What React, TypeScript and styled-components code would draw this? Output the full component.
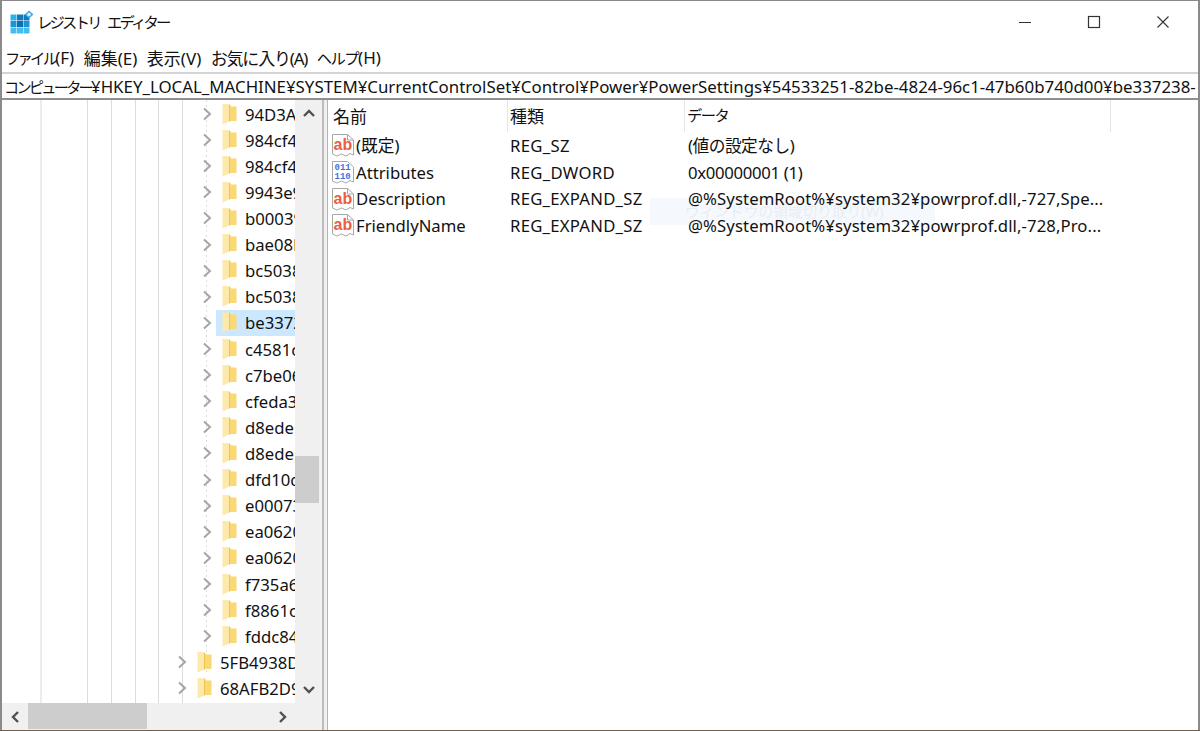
import React from 'react'
import styled, { createGlobalStyle } from 'styled-components'

const GlobalStyle = createGlobalStyle`
	* {
		box-sizing: border-box;
	}

	html,
	body {
		margin: 0;
		height: 731px;
		overflow: hidden;
		background: #75604f;
	}

	body {
		color: #111;
		font-family: 'Noto Sans', 'Noto Sans CJK JP', sans-serif;
		font-size: 16.7px;
	}
`

const Window = styled.div`
	background: #fff;
	border: solid #8a8a8a;
	border-width: 1px 2px 0 2px;
	display: flex;
	flex-direction: column;
	height: 730px;
	position: relative;
	width: 1200px;
`

const Kana = styled.span<{ $loose?: boolean }>`
	font-size: 0.9em;
	letter-spacing: ${(p) => (p.$loose ? '-0.1em' : '-0.18em')};
`

const TitleBar = styled.div`
	align-items: center;
	display: flex;
	flex: 0 0 42px;
	padding-left: 8px;
`

const Title = styled.div`
	font-size: 17px;
	margin-left: 3px;
	margin-top: -1px;
	word-spacing: 6px;
`

const WindowButtons = styled.div`
	display: flex;
	margin-left: auto;
	margin-right: 1px;
`

const WindowButton = styled.div`
	align-items: center;
	display: flex;
	height: 42px;
	justify-content: center;
	width: 69px;
`

const MenuBar = styled.div`
	align-items: center;
	display: flex;
	flex: 0 0 29px;
	font-size: 17px;
	gap: 9.5px;
	padding-left: 3px;
	padding-bottom: 1px;
`

const MenuItem = styled.div<{ $spacing?: number }>`
	letter-spacing: ${(p) => p.$spacing ?? 0}px;
	white-space: nowrap;
`

const AddressBar = styled.div`
	align-items: center;
	border-bottom: 2px solid #8f8f8f;
	border-top: 2px solid #d4d4d4;
	display: flex;
	flex: 0 0 28px;
	font-size: 16.85px;
	overflow: hidden;
	padding-left: 2px;
	white-space: pre;
`

const Body = styled.div`
	display: flex;
	flex: 1;
	min-height: 0;
`

const TreePane = styled.div`
	display: grid;
	flex: 0 0 320px;
	grid-template-columns: 1fr 27px;
	grid-template-rows: 1fr 27px;
	min-height: 0;
`

const TreeView = styled.div`
	background-image:
		linear-gradient(#ececec, #ececec),
		linear-gradient(#dcdcdc, #dcdcdc),
		linear-gradient(#dcdcdc, #dcdcdc),
		linear-gradient(#dcdcdc, #dcdcdc),
		linear-gradient(#dcdcdc, #dcdcdc),
		linear-gradient(#dcdcdc, #dcdcdc),
		repeating-linear-gradient(#dcdcdc 0 2px, transparent 2px 5px);
	background-position: 38px 0, 85px 0, 109px 0, 133px 0, 156px 0, 180px 0, 204px 0;
	background-repeat: no-repeat;
	background-size: 2px 100%, 1px 100%, 1px 100%, 1px 100%, 1px 100%, 1px 100%, 1px 575px;
	overflow: hidden;
	padding-top: 1px;
`

const TreeRow = styled.div<{ $depth: number }>`
	align-items: center;
	display: flex;
	height: 26.12px;
	padding-left: ${(p) => (p.$depth === 1 ? 199 : 174)}px;
	white-space: nowrap;
`

const Chevron = styled.svg`
	flex: 0 0 12px;
	height: 14px;
	width: 12px;
`

const RowBody = styled.div<{ $selected?: boolean }>`
	align-items: center;
	background: ${(p) => (p.$selected ? '#cce8ff' : 'transparent')};
	display: flex;
	flex: 1;
	gap: 8px;
	height: 100%;
	margin-left: 3px;
	min-width: 0;
	overflow: hidden;
	padding-left: 6px;
`

const VerticalScroll = styled.div`
	background: #f0f0f0;
	display: flex;
	flex-direction: column;
	justify-content: space-between;
	position: relative;
`

const ScrollArrow = styled.div<{ $endGap?: number }>`
	align-items: center;
	display: flex;
	flex: 0 0 26px;
	justify-content: center;
	margin-right: ${(p) => p.$endGap ?? 0}px;
`

const VerticalThumb = styled.div`
	background: #cdcdcd;
	height: 47px;
	left: 0;
	position: absolute;
	right: 3px;
	top: 356px;
`

const HorizontalScroll = styled.div`
	align-items: center;
	background: #f0f0f0;
	display: flex;
	grid-column: 1 / 3;
	justify-content: space-between;
	position: relative;
`

const HorizontalThumb = styled.div`
	background: #cdcdcd;
	bottom: 1px;
	left: 26px;
	position: absolute;
	top: 0;
	width: 119px;
`

const Splitter = styled.div`
	background: #f0f0f0;
	border-left: 2px solid #bcbcbc;
	border-right: 1px solid #b4b4b4;
	flex: 0 0 6px;
`

const ListPane = styled.div`
	display: flex;
	flex: 1;
	flex-direction: column;
	min-width: 0;
	position: relative;
	z-index: 1;
`

const ListHeader = styled.div`
	display: grid;
	flex: 0 0 32px;
	font-size: 17px;
	grid-template-columns: 180px 177px 426px;
`

const HeaderCell = styled.div<{ $first?: boolean }>`
	border-right: 1px solid #e5e5e5;
	padding-left: ${(p) => (p.$first ? 5 : 2)}px;
	padding-top: 3px;
`

const ListRow = styled.div`
	align-items: center;
	display: grid;
	grid-template-columns: 180px 178px 1fr;
	height: 26.7px;
`

const NameCell = styled.div`
	align-items: center;
	display: flex;
	gap: 1px;
	padding-left: 3px;
`

const ValueCell = styled.div<{ $spacing?: number }>`
	letter-spacing: ${(p) => p.$spacing ?? 0}px;
	padding-left: 2px;
	white-space: nowrap;
`

const GhostTooltip = styled.div`
	background: #f5f9fd;
	color: #e9edf3;
	font-size: 14.7px;
	height: 27px;
	left: 648px;
	line-height: 27px;
	padding-left: 35px;
	position: absolute;
	top: 197px;
	width: 285px;
`

const FolderIcon = () => (
	<svg width="15" height="21" viewBox="0 0 15 21" style={{ flex: '0 0 15px' }}>
		<path d="M0.5 0.5 H8 L9 2.5 H14.5 V17 H7 Z" fill="#fad873" />
		<path d="M0.5 0.5 H7.5 V17.5 L0.5 20.5 Z" fill="#fde9ab" />
		<path d="M7.5 1 V17.5" stroke="#f0c453" strokeWidth="1" />
	</svg>
)

const docShape = 'M1.5 1.5 H16.5 L22.5 7 V22 L19 20.5 L15 23 L10.5 21 L6 23 L1.5 21 Z'

const StringIcon = () => (
	<svg width="24" height="24" viewBox="0 0 24 24">
		<path d={docShape} fill="#fff" stroke="#a8a8a8" />
		<path d="M16.5 1.5 V7 H22.5" fill="none" stroke="#a8a8a8" />
		<text x="2.5" y="17" fontFamily="'Liberation Sans', sans-serif" fontSize="16" fontWeight="700" fill="#e8603f">
			ab
		</text>
	</svg>
)

const BinaryIcon = () => (
	<svg width="24" height="24" viewBox="0 0 24 24">
		<path d={docShape} fill="#fff" stroke="#a8a8a8" />
		<text x="3.5" y="10" fontFamily="'Liberation Mono', monospace" fontSize="9" fontWeight="700" fill="#3f73e0">
			011
		</text>
		<text x="3.5" y="19" fontFamily="'Liberation Mono', monospace" fontSize="9" fontWeight="700" fill="#3f73e0">
			110
		</text>
	</svg>
)

const appCells = [
	['#2fb0ec', '#1279bd', '#1279bd'],
	['#1b93d8', '#0f6fb2', '#1b93d8'],
	['#44bdf0', '#44bdf0', '#44bdf0'],
]

const AppIcon = () => (
	<svg width="24" height="24" viewBox="0 0 24 24">
		{appCells.map((row, rowKey) =>
			row.map((fill, cellKey) => (
				<rect key={`${rowKey}-${cellKey}`} x={0.5 + cellKey * 6.5} y={4.5 + rowKey * 6.5} width="6" height="6" fill={fill} />
			)),
		)}
		<path d="M19 0.5 L23.5 4.5 L19 8.5 L14.5 4.5 Z" fill="#4aa8dc" />
		<circle cx="19" cy="4.5" r="1.8" fill="#d4effa" />
	</svg>
)

const treeItems = [
	['94D3A615', 1],
	['984cf492', 1],
	['984cf493', 1],
	['9943e905', 1],
	['b000397d', 1],
	['bae08b81', 1],
	['bc5038f7', 1],
	['bc5038f8', 1],
	['be337238', 1],
	['c4581c31', 1],
	['c7be0679', 1],
	['cfeda3d0', 1],
	['d8edeb9b', 1],
	['d8edeb9c', 1],
	['dfd10d17', 1],
	['e00073a1', 1],
	['ea062031', 1],
	['ea062032', 1],
	['f735a673', 1],
	['f8861c27', 1],
	['fddc8450', 1],
	['5FB4938D', 0],
	['68AFB2D9', 0],
] as [string, number][]

const values = [
	{ name: '(既定)', type: 'REG_SZ', data: '(値の設定なし)', binary: false, typeSpacing: 0.3, dataSpacing: -0.5 },
	{ name: 'Attributes', type: 'REG_DWORD', data: '0x00000001 (1)', binary: true, typeSpacing: 0.3, dataSpacing: -0.3 },
	{ name: 'Description', type: 'REG_EXPAND_SZ', data: '@%SystemRoot%¥system32¥powrprof.dll,-727,Spe...', binary: false, typeSpacing: 0.25, dataSpacing: 0.1 },
	{ name: 'FriendlyName', type: 'REG_EXPAND_SZ', data: '@%SystemRoot%¥system32¥powrprof.dll,-728,Pro...', binary: false, typeSpacing: 0.25, dataSpacing: 0.1 },
]

export default function App() {
	return (
		<>
			<GlobalStyle />
			<Window>
				<TitleBar>
					<AppIcon />
					<Title>
						<Kana>レジストリ エディター</Kana>
					</Title>
					<WindowButtons>
						<WindowButton>
							<svg width="14" height="14" viewBox="0 0 14 14">
								<path d="M1 7.5 H13" stroke="#333" strokeWidth="1" />
							</svg>
						</WindowButton>
						<WindowButton>
							<svg width="14" height="14" viewBox="0 0 14 14">
								<rect x="1.5" y="1.5" width="11" height="11" fill="none" stroke="#333" strokeWidth="1.2" />
							</svg>
						</WindowButton>
						<WindowButton>
							<svg width="14" height="14" viewBox="0 0 14 14">
								<path d="M1.5 1.5 L12.5 12.5 M12.5 1.5 L1.5 12.5" stroke="#333" strokeWidth="1.1" />
							</svg>
						</WindowButton>
					</WindowButtons>
				</TitleBar>
				<MenuBar>
					<MenuItem>
						<Kana>ファイル</Kana>(F)
					</MenuItem>
					<MenuItem>編集(E)</MenuItem>
					<MenuItem>表示(V)</MenuItem>
					<MenuItem $spacing={-1.2}>お気に入り(A)</MenuItem>
					<MenuItem>
						<Kana $loose>ヘルプ</Kana>(H)
					</MenuItem>
				</MenuBar>
				<AddressBar>
					<Kana>コンピューター</Kana>¥HKEY_LOCAL_MACHINE¥SYSTEM¥CurrentControlSet¥Control¥Power¥PowerSettings¥54533251-82be-4824-96c1-47b60b740d00¥be337238-
				</AddressBar>
				<Body>
					<TreePane>
						<TreeView>
							{treeItems.map(([label, depth]) => (
								<TreeRow key={label} $depth={depth}>
									<Chevron viewBox="0 0 12 14">
										<path d="M3 1.5 L9 7 L3 12.5" fill="none" stroke="#a6a6a6" strokeWidth="2" />
									</Chevron>
									<RowBody $selected={label === 'be337238'}>
										<FolderIcon />
										<span>{label}</span>
									</RowBody>
								</TreeRow>
							))}
						</TreeView>
						<VerticalScroll>
							<ScrollArrow>
								<svg width="14" height="10" viewBox="0 0 14 10">
									<path d="M2 8 L7 3 L12 8" fill="none" stroke="#505050" strokeWidth="2.4" />
								</svg>
							</ScrollArrow>
							<VerticalThumb />
							<ScrollArrow>
								<svg width="14" height="10" viewBox="0 0 14 10">
									<path d="M2 2 L7 7 L12 2" fill="none" stroke="#505050" strokeWidth="2.4" />
								</svg>
							</ScrollArrow>
						</VerticalScroll>
						<HorizontalScroll>
							<ScrollArrow>
								<svg width="10" height="14" viewBox="0 0 10 14">
									<path d="M8 2 L3 7 L8 12" fill="none" stroke="#505050" strokeWidth="2.4" />
								</svg>
							</ScrollArrow>
							<HorizontalThumb />
							<ScrollArrow $endGap={26}>
								<svg width="10" height="14" viewBox="0 0 10 14">
									<path d="M2 2 L7 7 L2 12" fill="none" stroke="#505050" strokeWidth="2.4" />
								</svg>
							</ScrollArrow>
						</HorizontalScroll>
					</TreePane>
					<Splitter />
					<ListPane>
						<ListHeader>
							<HeaderCell $first>名前</HeaderCell>
							<HeaderCell>種類</HeaderCell>
							<HeaderCell>
								<Kana $loose>データ</Kana>
							</HeaderCell>
						</ListHeader>
						{values.map((value) => (
							<ListRow key={value.name}>
								<NameCell>
									{value.binary ? <BinaryIcon /> : <StringIcon />}
									{value.name}
								</NameCell>
								<ValueCell $spacing={value.typeSpacing}>{value.type}</ValueCell>
								<ValueCell $spacing={value.dataSpacing}>{value.data}</ValueCell>
							</ListRow>
						))}
					</ListPane>
				</Body>
				<GhostTooltip>ウィンドウの領域切り取り(W)</GhostTooltip>
			</Window>
		</>
	)
}
